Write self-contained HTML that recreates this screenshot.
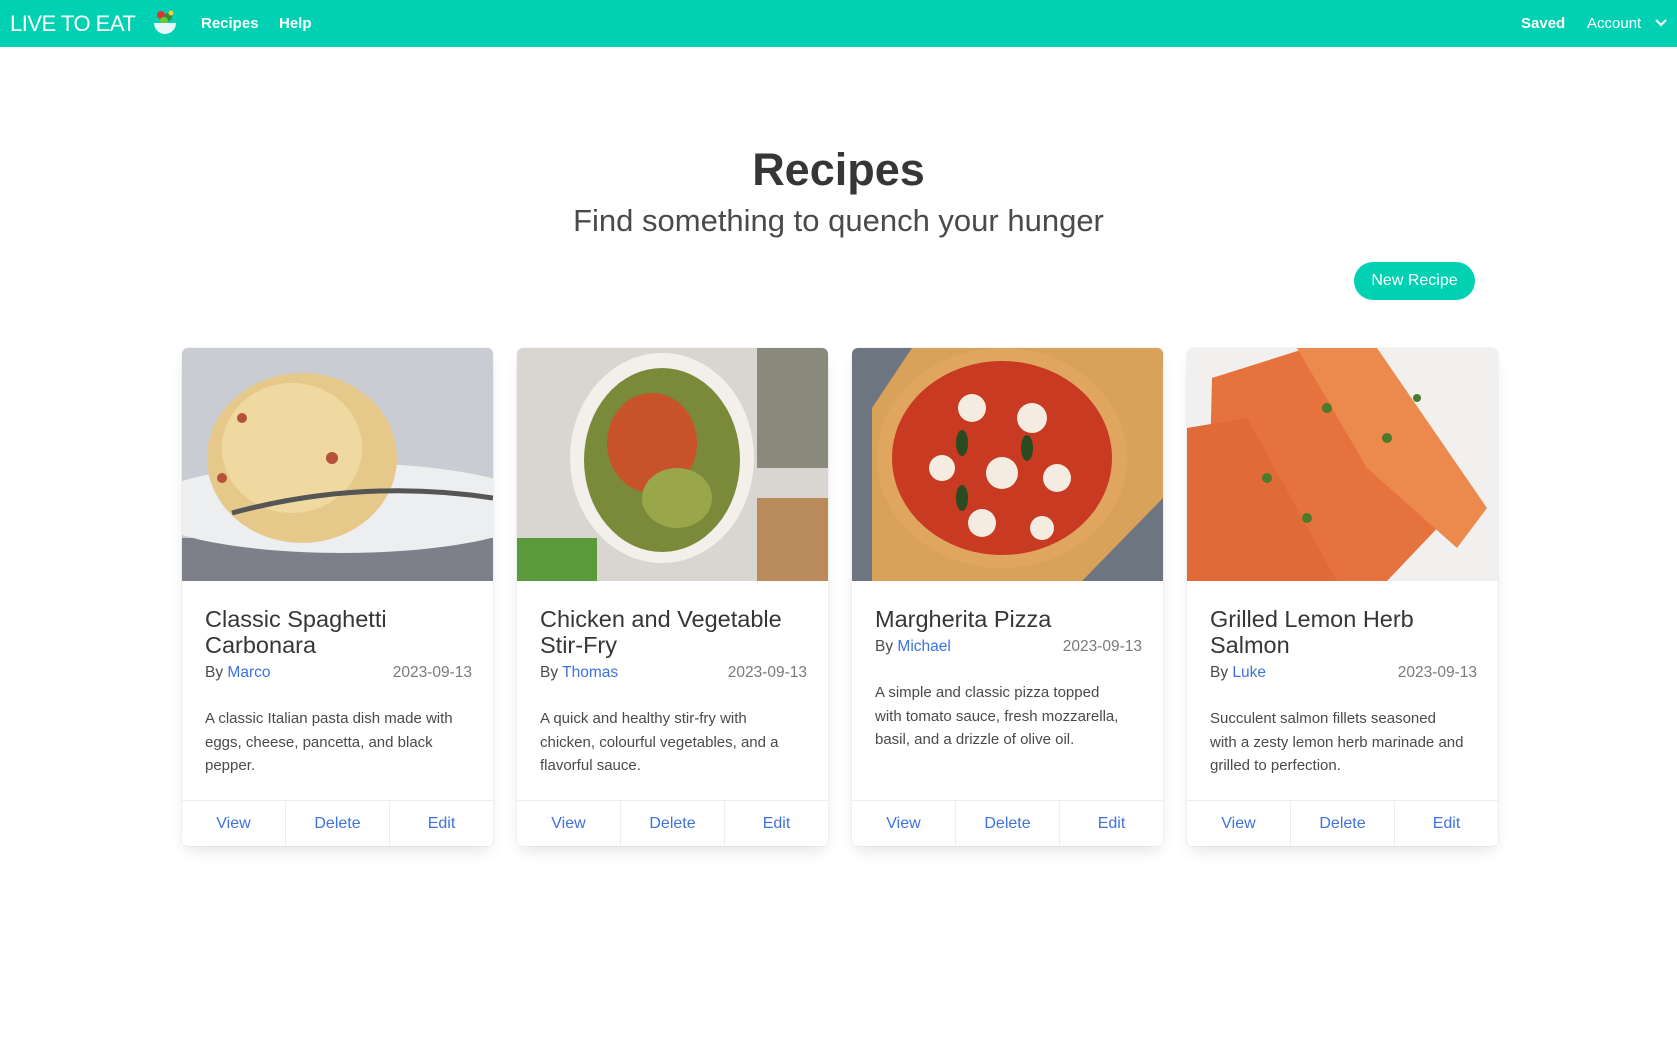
<!DOCTYPE html>
<html><head><meta charset="utf-8">
<style>
*{box-sizing:border-box;margin:0;padding:0}
body{width:1677px;height:1051px;background:#fff;font-family:"Liberation Sans","DejaVu Sans",sans-serif;color:#363636;position:relative;overflow:hidden}
.nav{position:absolute;left:0;top:0;width:1677px;height:47px;background:#00d1b2;color:#fff}
.nav span{position:absolute;top:0;line-height:47px;white-space:nowrap}
.logo{left:10px;font-size:22px;letter-spacing:-0.5px}
.nl{font-size:15px;font-weight:bold}
h1{position:absolute;left:0;width:1677px;top:144px;text-align:center;font-size:45px;font-weight:bold;color:#363636}
h2{position:absolute;left:0;width:1677px;top:203px;text-align:center;font-size:31px;font-weight:normal;color:#4a4a4a}
.btn{position:absolute;left:1354px;top:262px;width:121px;height:38px;border-radius:19px;background:#00d1b2;color:#fff;font-size:16px;text-align:center;line-height:38px}
.card{position:absolute;top:348px;width:311px;height:498px;background:#fff;border-radius:6px;box-shadow:0 8px 16px -4px rgba(10,10,10,.12),0 0 0 1px rgba(10,10,10,.03);overflow:hidden}
.card svg{display:block;width:311px;height:233px}
.ct{position:absolute;left:23px;top:258px;width:270px;font-size:23.5px;line-height:26px;color:#363636}
.by{position:absolute;left:23px;width:267px;font-size:15.5px;color:#4a4a4a}
.by a{color:#3e72e0;text-decoration:none}
.by i{font-style:normal;float:right;color:#7a7a7a}
.ds{position:absolute;left:23px;width:262px;font-size:15px;line-height:23.5px;color:#4a4a4a}
.ft{position:absolute;left:0;top:452px;width:311px;height:46px;border-top:1px solid #ededed;display:flex}
.ft div{flex:1;text-align:center;line-height:46px;color:#3e72e0;font-size:16px;border-right:1px solid #ededed}
.ft div:last-child{border-right:none}
</style></head><body>
<div class="nav">
<span class="logo">LIVE TO EAT</span>
<svg style="position:absolute;left:152px;top:8px" width="26" height="28" viewBox="0 0 26 28"><circle cx="9" cy="7" r="4" fill="#d33"/><circle cx="16" cy="9" r="4" fill="#3a8a3a"/><circle cx="12" cy="13" r="4" fill="#6c3"/><circle cx="19" cy="5" r="2.5" fill="#fc3"/><path d="M2 15h22a11 11 0 0 1-22 0z" fill="#e8f6fb"/></svg>
<span class="nl" style="left:201px">Recipes</span>
<span class="nl" style="left:279px">Help</span>
<span class="nl" style="left:1521px">Saved</span>
<span style="left:1587px;font-size:15px">Account</span>
<svg style="position:absolute;left:1654px;top:18px" width="14" height="10" viewBox="0 0 14 10"><path d="M2 2l5 5 5-5" stroke="#fff" stroke-width="2.2" fill="none"/></svg>
</div>
<h1>Recipes</h1>
<h2>Find something to quench your hunger</h2>
<div class="btn">New Recipe</div>

<div class="card" style="left:182px">
<svg viewBox="0 0 311 233" preserveAspectRatio="none"><rect width="311" height="233" fill="#c9ccd2"/><rect y="190" width="311" height="43" fill="#7d8088"/><ellipse cx="160" cy="160" rx="200" ry="45" fill="#eceef0"/><ellipse cx="120" cy="110" rx="95" ry="85" fill="#e6c98a"/><ellipse cx="110" cy="100" rx="70" ry="65" fill="#efd9a0"/><path d="M50 165 Q180 130 311 150" stroke="#555" stroke-width="5" fill="none"/><circle cx="60" cy="70" r="5" fill="#b5533a"/><circle cx="150" cy="110" r="6" fill="#b5533a"/><circle cx="40" cy="130" r="5" fill="#b5533a"/></svg>
<div class="ct">Classic Spaghetti Carbonara</div>
<div class="by" style="top:316px">By <a>Marco</a><i>2023-09-13</i></div>
<div class="ds" style="top:359px">A classic Italian pasta dish made with eggs, cheese, pancetta, and black pepper.</div>
<div class="ft"><div>View</div><div>Delete</div><div>Edit</div></div>
</div>

<div class="card" style="left:517px">
<svg viewBox="0 0 311 233" preserveAspectRatio="none"><rect width="311" height="233" fill="#d9d6d2"/><rect x="240" y="0" width="71" height="120" fill="#8a8a7c"/><ellipse cx="145" cy="110" rx="92" ry="105" fill="#f3f0eb"/><ellipse cx="145" cy="112" rx="78" ry="92" fill="#7a8a3a"/><ellipse cx="135" cy="95" rx="45" ry="50" fill="#c8532a"/><ellipse cx="160" cy="150" rx="35" ry="30" fill="#9aa64a"/><rect x="0" y="190" width="80" height="43" fill="#5a9a3a"/><rect x="240" y="150" width="71" height="83" fill="#b98a5a"/></svg>
<div class="ct">Chicken and Vegetable Stir-Fry</div>
<div class="by" style="top:316px">By <a>Thomas</a><i>2023-09-13</i></div>
<div class="ds" style="top:359px">A quick and healthy stir-fry with chicken, colourful vegetables, and a flavorful sauce.</div>
<div class="ft"><div>View</div><div>Delete</div><div>Edit</div></div>
</div>

<div class="card" style="left:852px">
<svg viewBox="0 0 311 233" preserveAspectRatio="none"><rect width="311" height="233" fill="#6d7580"/><path d="M60 0 H311 V150 L230 233 H20 V60 Z" fill="#d9a25a"/><ellipse cx="150" cy="110" rx="125" ry="110" fill="#e0a660"/><ellipse cx="150" cy="110" rx="110" ry="97" fill="#c93a22"/><circle cx="120" cy="60" r="14" fill="#f4ece0"/><circle cx="180" cy="70" r="15" fill="#f4ece0"/><circle cx="90" cy="120" r="13" fill="#f4ece0"/><circle cx="150" cy="125" r="16" fill="#f4ece0"/><circle cx="205" cy="130" r="14" fill="#f4ece0"/><circle cx="130" cy="175" r="14" fill="#f4ece0"/><circle cx="190" cy="180" r="12" fill="#f4ece0"/><ellipse cx="110" cy="95" rx="6" ry="13" fill="#2a4a22"/><ellipse cx="175" cy="100" rx="6" ry="13" fill="#2a4a22"/><ellipse cx="110" cy="150" rx="6" ry="13" fill="#2a4a22"/></svg>
<div class="ct">Margherita Pizza</div>
<div class="by" style="top:290px">By <a>Michael</a><i>2023-09-13</i></div>
<div class="ds" style="top:333px">A simple and classic pizza topped<br>with tomato sauce, fresh mozzarella,<br>basil, and a drizzle of olive oil.</div>
<div class="ft"><div>View</div><div>Delete</div><div>Edit</div></div>
</div>

<div class="card" style="left:1187px">
<svg viewBox="0 0 311 233" preserveAspectRatio="none"><rect width="311" height="233" fill="#f2f0ee"/><path d="M25 30 L120 0 L180 0 L260 170 L200 233 L20 233 Z" fill="#e6733e"/><path d="M110 0 L190 0 L300 160 L270 200 L180 120 Z" fill="#ec8a4e"/><path d="M0 80 L60 70 L150 233 L0 233 Z" fill="#e06a38"/><circle cx="140" cy="60" r="5" fill="#4a7a2a"/><circle cx="200" cy="90" r="5" fill="#4a7a2a"/><circle cx="80" cy="130" r="5" fill="#4a7a2a"/><circle cx="230" cy="50" r="4" fill="#4a7a2a"/><circle cx="120" cy="170" r="5" fill="#4a7a2a"/></svg>
<div class="ct">Grilled Lemon Herb Salmon</div>
<div class="by" style="top:316px">By <a>Luke</a><i>2023-09-13</i></div>
<div class="ds" style="top:359px">Succulent salmon fillets seasoned<br>with a zesty lemon herb marinade and<br>grilled to perfection.</div>
<div class="ft"><div>View</div><div>Delete</div><div>Edit</div></div>
</div>
</body></html>
